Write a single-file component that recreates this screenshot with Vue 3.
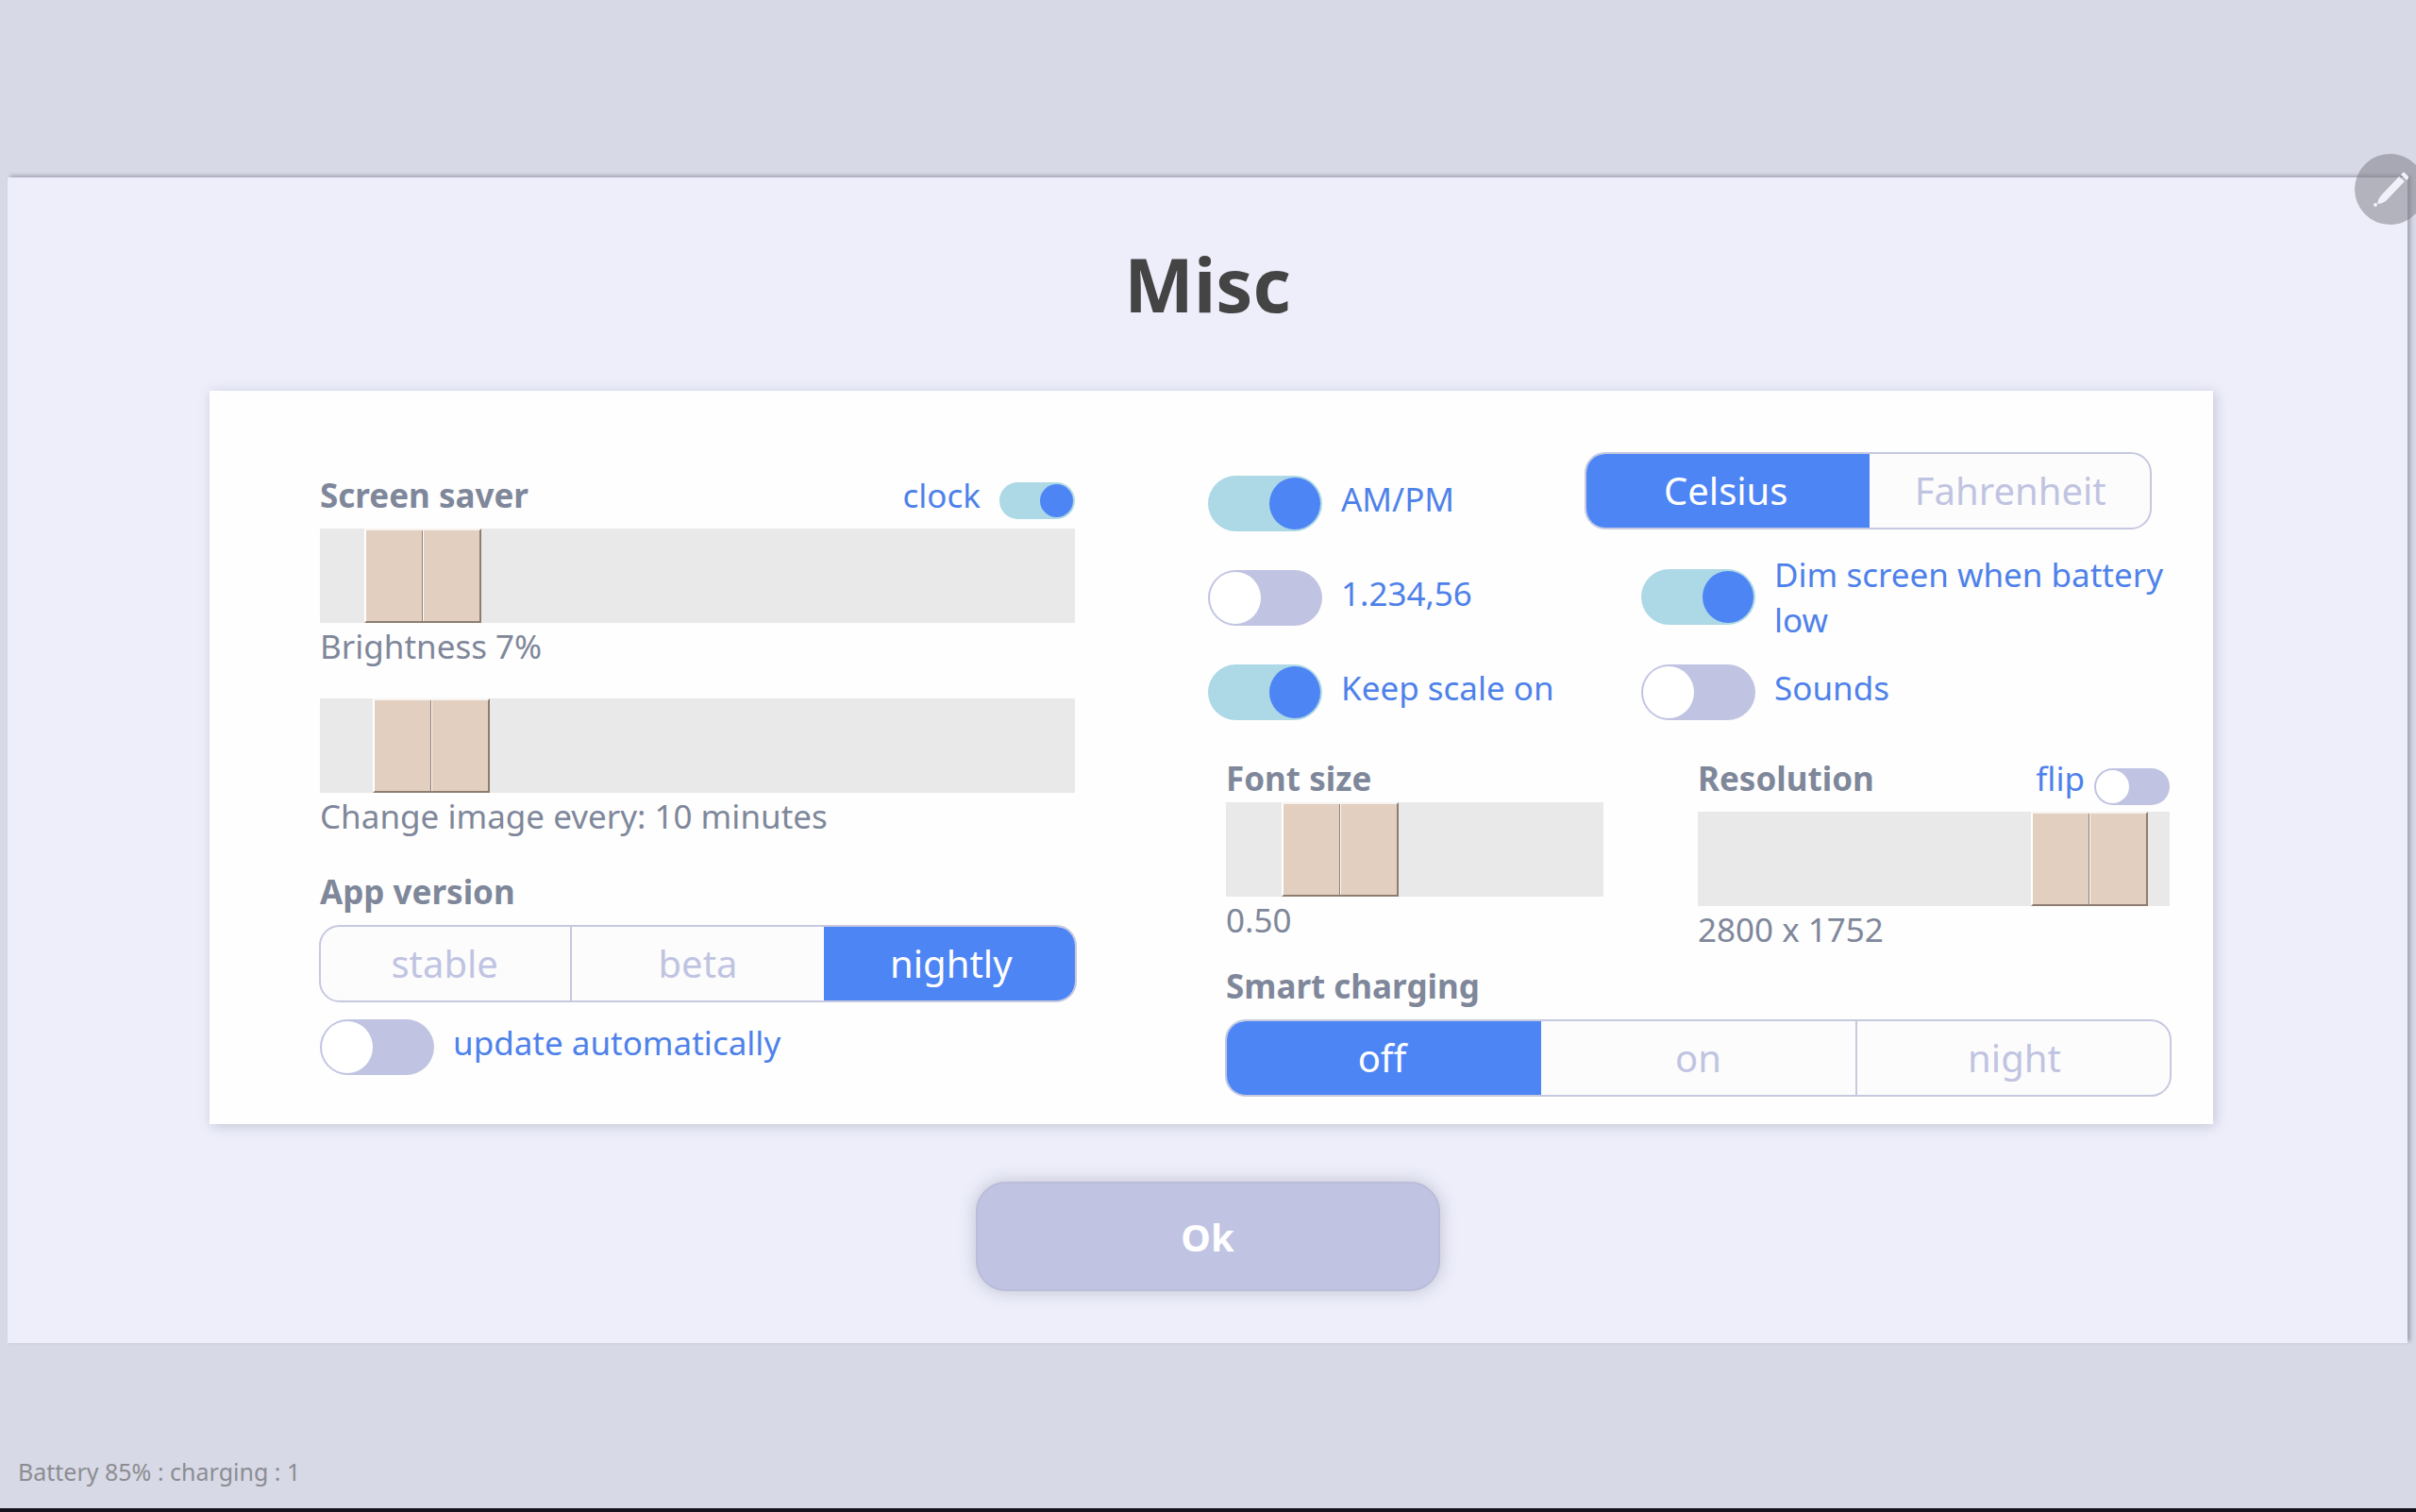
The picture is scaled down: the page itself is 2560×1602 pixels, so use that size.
<script setup>
import { ref } from 'vue'

const clock = ref(true)
const brightness = ref(7)
const imageInterval = ref(10)
const version = ref('nightly')
const autoUpdate = ref(false)

const ampm = ref(true)
const commaDecimal = ref(false)
const keepScaleOn = ref(true)
const unit = ref('Celsius')
const dimScreen = ref(true)
const sounds = ref(false)

const fontSize = ref(0.5)
const resolution = ref(2800)
const flip = ref(false)
const charging = ref('off')

const versions = ['stable', 'beta', 'nightly']
const units = ['Celsius', 'Fahrenheit']
const chargingModes = ['off', 'on', 'night']
</script>

<template>
  <div class="page">
    <main class="panel">
      <h1 class="title">Misc</h1>

      <div class="card">
        <section class="column">
          <div class="heading">
            <label class="name" for="brightness">Screen saver</label>
            <label class="option">
              <span>clock</span>
              <input v-model="clock" class="toggle small" type="checkbox" />
            </label>
          </div>
          <input id="brightness" v-model.number="brightness" class="slider" type="range" min="0" max="100" />
          <p class="value">Brightness {{ brightness }}%</p>

          <input
            v-model.number="imageInterval"
            class="slider next"
            type="range"
            min="0"
            max="120"
            aria-labelledby="interval-text"
          />
          <p id="interval-text" class="value">Change image every: {{ imageInterval }} minutes</p>

          <h2 id="version-name" class="name version-name">App version</h2>
          <div class="segments" role="radiogroup" aria-labelledby="version-name">
            <label v-for="item in versions" :key="item" class="segment">
              <input v-model="version" type="radio" name="version" :value="item" />
              <span>{{ item }}</span>
            </label>
          </div>
          <label class="option auto-update">
            <input v-model="autoUpdate" class="toggle" type="checkbox" />
            <span>update automatically</span>
          </label>
        </section>

        <section class="column">
          <div class="switches">
            <div class="formats">
              <label class="option">
                <input v-model="ampm" class="toggle" type="checkbox" />
                <span>AM/PM</span>
              </label>
              <label class="option">
                <input v-model="commaDecimal" class="toggle" type="checkbox" />
                <span>1.234,56</span>
              </label>
              <label class="option">
                <input v-model="keepScaleOn" class="toggle" type="checkbox" />
                <span>Keep scale on</span>
              </label>
            </div>
            <div class="device">
              <div class="segments units" role="radiogroup" aria-label="Temperature unit">
                <label v-for="item in units" :key="item" class="segment">
                  <input v-model="unit" type="radio" name="unit" :value="item" />
                  <span>{{ item }}</span>
                </label>
              </div>
              <label class="option indented two-line">
                <input v-model="dimScreen" class="toggle" type="checkbox" />
                <span>Dim screen when battery low</span>
              </label>
              <label class="option indented">
                <input v-model="sounds" class="toggle" type="checkbox" />
                <span>Sounds</span>
              </label>
            </div>
          </div>

          <div class="display">
            <div class="scales">
              <div class="column">
                <label class="name font-name" for="font-size">Font size</label>
                <input
                  id="font-size"
                  v-model.number="fontSize"
                  class="slider"
                  type="range"
                  min="0.23"
                  max="1.5"
                  step="0.01"
                />
                <p class="value">{{ fontSize.toFixed(2) }}</p>
              </div>
              <div class="column">
                <div class="heading">
                  <label class="name" for="resolution">Resolution</label>
                  <label class="option tight">
                    <span>flip</span>
                    <input v-model="flip" class="toggle small" type="checkbox" />
                  </label>
                </div>
                <input
                  id="resolution"
                  v-model.number="resolution"
                  class="slider"
                  type="range"
                  min="800"
                  max="2930"
                />
                <p class="value">{{ resolution }} x 1752</p>
              </div>
            </div>

            <h2 id="charging-name" class="name">Smart charging</h2>
            <div class="segments" role="radiogroup" aria-labelledby="charging-name">
              <label v-for="item in chargingModes" :key="item" class="segment">
                <input v-model="charging" type="radio" name="charging" :value="item" />
                <span>{{ item }}</span>
              </label>
            </div>
          </div>
        </section>
      </div>

      <button class="ok" type="button">Ok</button>
    </main>

    <footer class="status">Battery 85% : charging : 1</footer>

    <button class="pen" type="button" aria-label="Edit">
      <svg viewBox="0 0 75 75" aria-hidden="true">
        <path d="M24 53 Q25 47 29 43 L47 24 L53 29 L34 49 Q30 53 24 53 Z" />
        <path d="M49 22 L51 20 Q52 19 53 20 L57 24 Q57 25 57 26 L55 28 Z" />
        <circle cx="22" cy="54" r="2" />
      </svg>
    </button>
  </div>
</template>

<style>
body {
  margin: 0;
}
</style>

<style scoped>
* {
  box-sizing: border-box;
}

.page {
  position: relative;
  display: flex;
  flex-direction: column;
  min-height: 100vh;
  padding-top: 188px;
  overflow: hidden;
  border-bottom: 4px solid #15131c;
  background: #d7d9e6;
  color: #7f879a;
  font: 35px/48px "Noto Sans", "Open Sans", sans-serif;
}

.panel {
  display: flex;
  flex-direction: column;
  margin: 0 9px 0 8px;
  padding: 60px 0 55px;
  background: #edeefa;
  box-shadow: 3px -2px 4px rgba(80, 80, 105, 0.4);
}

.title {
  margin: 0 0 60px;
  color: #444;
  font-size: 78px;
  line-height: 106px;
  text-align: center;
}

.card {
  display: grid;
  grid-template-columns: 800fr 1019fr;
  column-gap: 141px;
  margin: 0 206px 0 214px;
  padding: 65px 46px 29px 117px;
  background: #fefefe;
  box-shadow: 2px 2px 12px rgba(80, 80, 105, 0.25);
}

.column {
  display: flex;
  flex-direction: column;
  min-width: 0;
}

.card > .column:first-child {
  padding-top: 22px;
}

.heading {
  display: flex;
  justify-content: space-between;
  height: 59px;
}

.name {
  margin: 0;
  font-size: 35px;
  font-weight: 700;
  line-height: 48px;
}

.font-name {
  height: 49px;
}

.version-name {
  margin-top: 32px;
}

.value {
  margin: 0;
  padding-top: 1px;
}

.option {
  display: flex;
  gap: 20px;
  min-height: 60px;
  color: #4e81ea;
}

.option span {
  padding-top: 1px;
}

.heading .option {
  min-height: 0;
}

.heading .option span {
  padding-top: 0;
}

.tight {
  gap: 10px;
}

.auto-update {
  margin-top: 18px;
}

.toggle {
  flex: none;
  appearance: none;
  width: 121px;
  height: 59px;
  margin: 0;
  padding: 2px;
  border-radius: 30px;
  background: #c0c4e2;
}

.toggle::before {
  content: "";
  display: block;
  width: 54px;
  height: 55px;
  border-radius: 50%;
  background: #fff;
}

.toggle:checked {
  background: #add8e6;
}

.toggle:checked::before {
  margin-left: auto;
  background: #4e85f4;
}

.toggle.small {
  align-self: flex-end;
  width: 80px;
  height: 39px;
  margin-bottom: 10px;
}

.tight .toggle.small {
  margin-bottom: 7px;
}

.toggle.small::before {
  width: 35px;
  height: 35px;
}

.slider {
  display: block;
  appearance: none;
  width: 100%;
  height: 100px;
  margin: 0;
  background: #e9e9e9;
}

.slider.next {
  margin-top: 31px;
}

.slider::-webkit-slider-thumb {
  appearance: none;
  width: 124px;
  height: 100px;
  border: 2px solid;
  border-color: #f6f3f0 #8d7d70 #8d7d70 #fff;
  background: linear-gradient(90deg, #8d7d70 50%, #fff 50%) center / 2px 100% no-repeat #e3cfbf;
}

.segments {
  display: flex;
  height: 82px;
  margin: 11px -2px 0 -1px;
  overflow: hidden;
  border: 2px solid #c6c9df;
  border-radius: 22px;
  background: #fcfcfd;
  color: #c0c4e1;
  font-size: 40px;
}

.segment {
  position: relative;
  display: flex;
  flex: 1;
  align-items: center;
  justify-content: center;
  margin: -2px 0;
}

.segment:first-child {
  margin-left: -2px;
}

.segment:last-child {
  margin-right: -2px;
}

.segment + .segment {
  border-left: 2px solid #c6c9df;
}

.segment input {
  position: absolute;
  inset: 0;
  appearance: none;
  margin: 0;
}

.segments .segment:has(:checked) {
  border-color: #4e85f4;
  background: #4e85f4;
  color: #fff;
}

.segment:has(:checked) + .segment {
  border-color: #4e85f4;
}

.switches {
  display: grid;
  grid-template-columns: 399fr 620fr;
}

.formats {
  display: flex;
  flex-direction: column;
  gap: 40px;
  padding-top: 25px;
}

.device {
  display: flex;
  flex-direction: column;
  gap: 23px;
}

.units {
  margin: 0 19px 0 0;
}

.indented {
  padding-left: 60px;
}

.two-line {
  align-items: center;
}

.display {
  margin-top: 37px;
  padding-left: 19px;
}

.scales {
  display: grid;
  grid-template-columns: 4fr 5fr;
  column-gap: 100px;
  margin-bottom: 12px;
}

.ok {
  align-self: center;
  width: 492px;
  height: 116px;
  margin-top: 61px;
  padding: 2px 0 0;
  border: 2px solid #b9bdda;
  border-radius: 32px;
  background: #c0c4e2;
  box-shadow: 0 0 18px rgba(80, 80, 105, 0.28);
  color: #fff;
  font: 700 40px/54px "Noto Sans", "Open Sans", sans-serif;
}

.status {
  margin-top: auto;
  padding: 0 19px 21px;
  color: #8c8d92;
  font-size: 25px;
  line-height: 35px;
}

.pen {
  position: absolute;
  top: 163px;
  right: -10px;
  width: 75px;
  height: 75px;
  padding: 0;
  border: 0;
  border-radius: 50%;
  background: rgba(120, 120, 128, 0.5);
}

.pen svg {
  display: block;
  fill: #f1f1fa;
}
</style>
